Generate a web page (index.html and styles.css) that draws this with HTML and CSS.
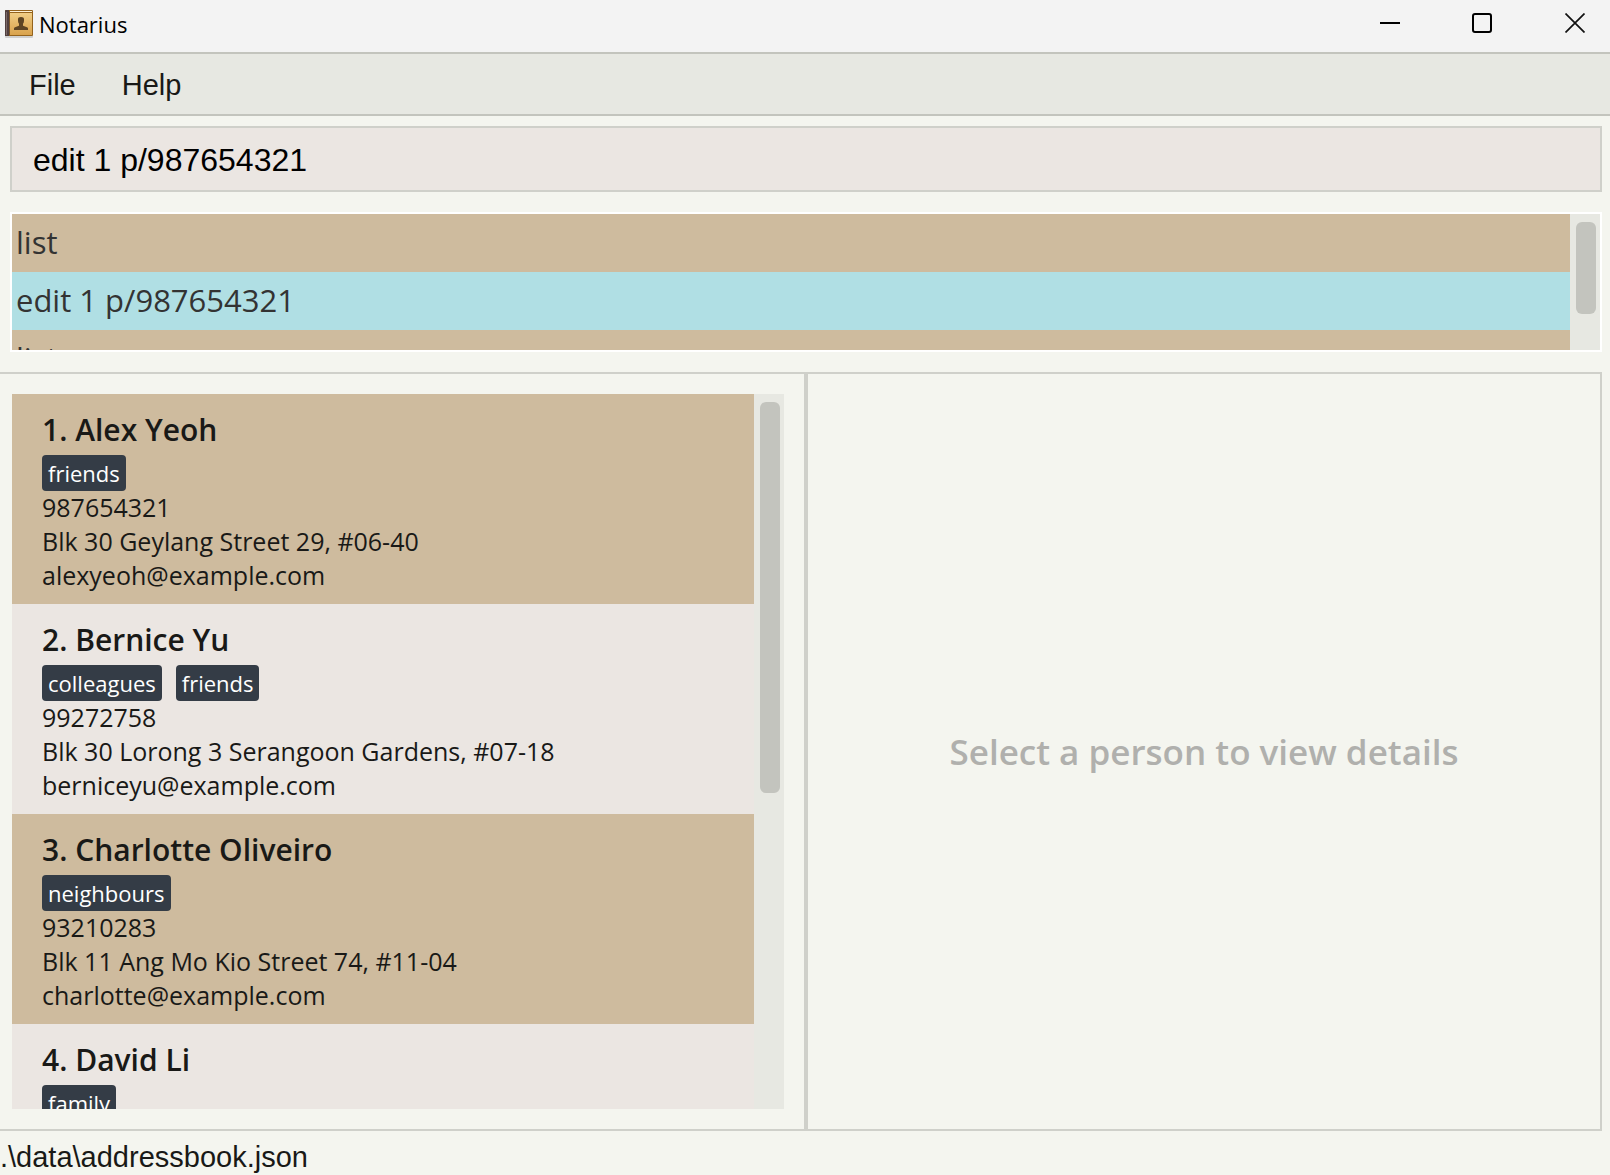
FILE: index.html
```html
<!DOCTYPE html>
<html lang="en">
<head>
<meta charset="utf-8">
<title>Notarius</title>
<link rel="stylesheet" href="styles.css">
</head>
<body>
<header class="titlebar">
  <svg class="app-icon" width="30" height="30" viewBox="0 0 30 30" aria-hidden="true">
    <defs>
      <linearGradient id="cover" x1="0" y1="0" x2="0" y2="1">
        <stop offset="0" stop-color="#f0cd84"/>
        <stop offset="1" stop-color="#d9a24c"/>
      </linearGradient>
    </defs>
    <rect x="1" y="26" width="28" height="3" rx="1" fill="#cfcfcf"/>
    <rect x="1" y="1" width="28" height="26" rx="1" fill="#94631c"/>
    <rect x="6" y="2" width="22" height="1" fill="#fff3d8"/>
    <rect x="6" y="4" width="22" height="22" fill="url(#cover)"/>
    <path d="M1 2a1 1 0 0 1 1-1h3v26H1z" fill="#51403f"/>
    <path d="M2 3h1v23H2z" fill="#7c6a68"/>
    <path d="M5 3h1v23H5z" fill="#7a5428"/>
    <path d="M10 21v-1.500q0-.8 1-1.200l4-1.500v-2q-1-1-1-3V10q0-2 3-2t3 2v1.800q0 2-1 3v2l4 1.500q1 .4 1 1.200V21z" fill="#5d4524"/>
  </svg>
  <h1 class="app-name">Notarius</h1>
  <div class="window-buttons">
    <button type="button" class="window-button" aria-label="Minimize">
      <svg width="20" height="20" viewBox="0 0 20 20"><path d="M0 10H20" stroke="#000" stroke-width="2"/></svg>
    </button>
    <button type="button" class="window-button" aria-label="Maximize">
      <svg width="20" height="20" viewBox="0 0 20 20"><rect x="1" y="1" width="18" height="18" rx="2" fill="none" stroke="#000" stroke-width="2"/></svg>
    </button>
    <button type="button" class="window-button window-button-close" aria-label="Close">
      <svg width="20" height="20" viewBox="0 0 20 20"><path d="M.5.5l19 19M19.500.5l-19 19" stroke="#111" stroke-width="1.700"/></svg>
    </button>
  </div>
</header>
<nav class="menubar" aria-label="Main menu">
  <button type="button" class="menu-button">File</button>
  <button type="button" class="menu-button">Help</button>
</nav>
<main class="content">
  <section class="command">
    <input class="command-input" type="text" aria-label="Command" value="edit 1 p/987654321">
    <div class="history">
      <ul class="history-list">
        <li class="history-item">list</li>
        <li class="history-item history-item-selected">edit 1 p/987654321</li>
        <li class="history-item">list</li>
      </ul>
      <div class="scrollbar"><div class="scroll-thumb history-thumb"></div></div>
    </div>
  </section>
  <div class="panes">
    <section class="pane people" aria-label="Persons">
      <ol class="people-list">
        <li class="person">
          <h2 class="person-name">1. Alex Yeoh</h2>
          <div class="tags"><span class="tag">friends</span></div>
          <p class="detail">987654321</p>
          <p class="detail">Blk 30 Geylang Street 29, #06-40</p>
          <p class="detail">alexyeoh@example.com</p>
        </li>
        <li class="person">
          <h2 class="person-name">2. Bernice Yu</h2>
          <div class="tags"><span class="tag">colleagues</span><span class="tag">friends</span></div>
          <p class="detail">99272758</p>
          <p class="detail">Blk 30 Lorong 3 Serangoon Gardens, #07-18</p>
          <p class="detail">berniceyu@example.com</p>
        </li>
        <li class="person">
          <h2 class="person-name">3. Charlotte Oliveiro</h2>
          <div class="tags"><span class="tag">neighbours</span></div>
          <p class="detail">93210283</p>
          <p class="detail">Blk 11 Ang Mo Kio Street 74, #11-04</p>
          <p class="detail">charlotte@example.com</p>
        </li>
        <li class="person">
          <h2 class="person-name">4. David Li</h2>
          <div class="tags"><span class="tag">family</span></div>
        </li>
      </ol>
      <div class="scrollbar"><div class="scroll-thumb people-thumb"></div></div>
    </section>
    <section class="pane details" aria-label="Details">
      <p class="placeholder">Select a person to view details</p>
    </section>
  </div>
</main>
<footer class="statusbar">.\data\addressbook.json</footer>
</body>
</html>
```
FILE: styles.css
```css
* {
  box-sizing: border-box;
}

body {
  display: flex;
  flex-direction: column;
  height: 100vh;
  margin: 0;
  overflow: hidden;
  background: #f4f5ef;
  color: #191917;
  font-family: "Open Sans", "Noto Sans", sans-serif;
}

h1, h2, p, ul, ol {
  margin: 0;
  padding: 0;
  font-weight: 400;
}

ul, ol {
  list-style: none;
}

button {
  padding: 0;
  border: 0;
  background: none;
  color: inherit;
}

.titlebar {
  display: flex;
  flex: none;
  align-items: center;
  height: 52px;
  padding-left: 4px;
  padding-bottom: 4px;
  background: #f3f3f3;
}

.app-icon {
  flex: none;
}

.app-name {
  flex: 1;
  margin-left: 5px;
  color: #000;
  font-size: 22px;
  line-height: 30px;
}

.window-buttons {
  display: flex;
  padding-bottom: 2px;
}

.window-button {
  display: flex;
  align-items: center;
  justify-content: center;
  width: 92px;
  height: 46px;
}

.window-button-close {
  width: 82px;
  padding-left: 12px;
}

.menubar {
  display: flex;
  flex: none;
  height: 64px;
  border-top: 2px solid #c3c4bd;
  border-bottom: 2px solid #c3c4bd;
  background: #e7e8e2;
  padding-left: 6px;
}

.menu-button {
  padding: 2px 23px 0;
  font-family: "Liberation Sans", Arial, sans-serif;
  font-size: 29px;
}

.content {
  display: flex;
  flex: 1;
  flex-direction: column;
  min-height: 0;
  padding-right: 8px;
}

.command {
  flex: none;
  padding: 10px 0 20px 10px;
}

.command-input {
  display: block;
  width: 100%;
  height: 66px;
  padding: 2px 21px 0;
  border: 2px solid #cfd0ca;
  border-radius: 0;
  outline: 0;
  background: #ebe6e2;
  color: #000;
  font-family: "Liberation Sans", Arial, sans-serif;
  font-size: 32px;
}

.history {
  display: flex;
  height: 140px;
  margin-top: 20px;
  border: 2px solid #fff;
  overflow: hidden;
}

.history-list {
  flex: 1;
}

.history-item {
  height: 58px;
  padding-left: 4px;
  background: #cebb9e;
  color: #333;
  font-size: 31px;
  line-height: 56px;
}

.history-item-selected {
  background: #b0dfe4;
}

.scrollbar {
  flex: none;
  width: 30px;
  padding: 8px 4px 8px 6px;
  background: #e7e8e2;
}

.scroll-thumb {
  border-radius: 6px;
  background: #c3c4be;
}

.history-thumb {
  height: 77%;
}

.people-thumb {
  height: 56%;
}

.panes {
  display: flex;
  flex: 1;
  min-height: 0;
  border: 2px solid #cfd0ca;
  border-left: 0;
}

.pane {
  flex: 1;
  min-width: 0;
}

.people {
  display: flex;
  flex: 0 0 50.500%;
  padding: 20px 20px 20px 12px;
  border-right: 4px solid #cfd0ca;
}

.people-list {
  flex: 1;
  min-width: 0;
  overflow: hidden;
}

.person {
  height: 210px;
  padding: 15px 10px 10px 30px;
  background: #ebe6e2;
}

.person:nth-child(odd) {
  background: #cebb9e;
}

.person-name {
  font-size: 30px;
  font-weight: 600;
  line-height: 42px;
}

.tags {
  display: flex;
  gap: 14px;
  margin: 4px 0 -1px;
}

.tag {
  padding: 0 6px;
  border-radius: 4px;
  background: #343c46;
  color: #fff;
  font-size: 22px;
  line-height: 36px;
}

.detail {
  font-size: 25px;
  line-height: 34px;
}

.details {
  display: flex;
  align-items: center;
  justify-content: center;
}

.placeholder {
  color: #b0b0ad;
  font-size: 35px;
  font-weight: 600;
}

.statusbar {
  flex: none;
  height: 44px;
  font-family: "Liberation Sans", Arial, sans-serif;
  font-size: 29px;
  line-height: 52px;
}
```
